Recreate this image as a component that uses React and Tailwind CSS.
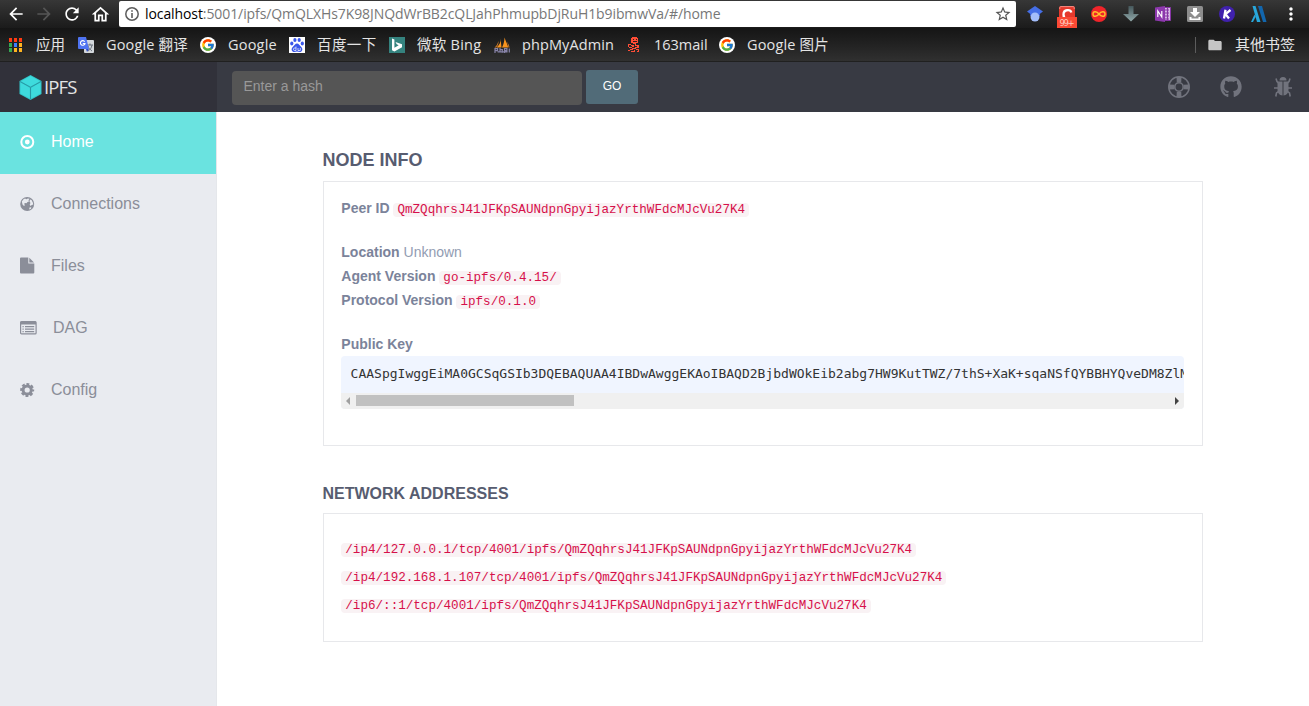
import { FaGithub } from 'react-icons/fa';
import { FcGoogle } from 'react-icons/fc';
import { MdArrowBack, MdArrowForward, MdRefresh, MdOutlineHome, MdMoreVert, MdStarBorder, MdFolder } from 'react-icons/md';

const PEER = 'QmZQqhrsJ41JFKpSAUNdpnGpyijazYrthWFdcMJcVu27K4';
const KEY = 'CAASpgIwggEiMA0GCSqGSIb3DQEBAQUAA4IBDwAwggEKAoIBAQD2BjbdWOkEib2abg7HW9KutTWZ/7thS+XaK+sqaNSfQYBBHYQveDM8ZlM';

function Code({ children }) {
  return (
    <code className="inline-block h-[14px] rounded-[4px] bg-[#f9f2f4] px-1 align-baseline font-['Liberation_Mono',monospace] text-[12.6px] leading-[14px] text-[#d6104a]">
      {children}
    </code>
  );
}

function Bookmark({ icon, label, gap, width, tracking = '' }) {
  return (
    <div className={`flex items-center ${gap} ${width}`}>
      {icon}
      <span className={`whitespace-pre ${tracking}`}>{label}</span>
    </div>
  );
}

function AppsIcon() {
  const c = ['#ff3b12', '#ff3b12', '#ff3b12', '#34a853', '#3b7cff', '#ffb420', '#34a853', '#ffb420', '#ffb420'];
  return (
    <svg width="14" height="14" viewBox="0 0 14 14" shapeRendering="crispEdges">
      {c.map((f, i) => <rect key={i} x={(i % 3) * 5} y={Math.floor(i / 3) * 5} width="3" height="4" fill={f} />)}
    </svg>
  );
}

function TranslateIcon() {
  return (
    <svg width="16" height="16" viewBox="0 0 16 16">
      <rect x="6" y="3" width="10" height="13" rx="1" fill="#d4d8dc" />
      <path d="M9 8h6M12 6.500V8M10 14c2-1 3.500-3 4-6M10 9c.7 2 2 3.600 4 5" stroke="#68717c" strokeWidth="1" fill="none" />
      <path d="M1 0h7l3 12H1a1 1 0 0 1-1-1V1a1 1 0 0 1 1-1z" fill="#4f74f2" />
      <path d="M8 12h3l-2 3z" fill="#2b49c5" />
      <path d="M6.700 4.700A2.300 2.300 0 1 0 7 6.500H4.800" stroke="#fff" strokeWidth="1.100" fill="none" />
    </svg>
  );
}

function GoogleIcon() {
  return (
    <span className="flex size-4 items-center justify-center rounded-full bg-white">
      <FcGoogle size={14} />
    </span>
  );
}

function BaiduIcon() {
  return (
    <svg width="16" height="16" viewBox="0 0 16 16">
      <rect width="16" height="16" fill="#fff" />
      <g fill="#3a57ea">
        <ellipse cx="5.900" cy="3" rx="1.600" ry="2.100" />
        <ellipse cx="10.200" cy="3" rx="1.600" ry="2.100" />
        <ellipse cx="2.800" cy="6.500" rx="1.600" ry="1.900" />
        <ellipse cx="13.300" cy="6.500" rx="1.600" ry="1.900" />
        <path d="M8 6.600c1.900 0 2.200 1.500 3.600 2.600 3 2.400 1.900 5.800-1 5.800-1 0-1.600-.4-2.600-.4s-1.600.4-2.600.4c-2.900 0-4-3.400-1-5.800C5.800 8.100 6.100 6.600 8 6.600z" />
      </g>
      <path d="M7 9.500v4H5.700a1.200 1.200 0 0 1 0-2.500H7M9 11v2.500h2.300V11" stroke="#fff" strokeWidth=".7" fill="none" />
    </svg>
  );
}

function BingIcon() {
  return (
    <svg width="16" height="16" viewBox="0 0 16 16">
      <rect width="16" height="16" fill="#35837f" />
      <path d="M3 1.500l2.400.9v8.400l4.300-2.500-2-1L6.500 5 13 7.200v3L5.400 14.500 3 13.200z" fill="#fff" />
    </svg>
  );
}

function PhpIcon() {
  return (
    <svg width="16" height="16" viewBox="0 0 16 16">
      <path d="M6.500 1.500C7 5 5.500 8 2.500 10.500h5zM10.500.500c1 3.500 3 6.500 3.700 10H8C9.500 7.500 10.500 4 10.500.500z" fill="#f7931e" />
      <path d="M4.300 4C4 6.500 2.500 9 .500 10.500H2C4 8.500 4.800 6.500 4.300 4zM13 4.500c1.200 2 2.200 4 2.500 6h-1C14.300 8.500 13.800 6.500 13 4.500z" fill="#e08327" />
      <path d="M1 16v-4.300h2.600v2H1M6 11v4.500M6 12.700h2.300v3M10.500 16v-4.300h2.400v2h-2.400M15.300 11.500v4M3.600 14.800h10" stroke="#8783a8" strokeWidth="1.200" fill="none" />
    </svg>
  );
}

function MailIcon() {
  return (
    <svg width="12" height="15" viewBox="0 0 12 15" shapeRendering="crispEdges">
      <path d="M4 0h5v1h1v5H8v1H5V6H3V1h1z" fill="#ff4d36" />
      <path d="M5 2h1v1H5zM8 2h1v1H8zM5 4h4v1H5z" fill="#321c1a" />
      <path d="M0 7h3v1h3v1H3V8H1v2H0zM7 7h1v1h3v2H9V9H6v1H4v1H1v-1h3V9h3zM4 11h3v-1h4v1H8v1H5v1H2v1H0v-1h2v-1h2zM8 12h3v3H9v-1h1v-1H8zM6 13h1v2H3v-1h3z" fill="#ff4d36" />
    </svg>
  );
}

function Extensions() {
  return (
    <div className="flex flex-1 items-center text-white">
      <svg width="16" height="16" viewBox="0 0 16 16" className="ml-[11px]">
        <path d="M3 6h10v4H3z" fill="#3654c4" />
        <path d="M8 0l8 5.500-4 3H4l-4-3z" fill="#456ee6" />
        <circle cx="8" cy="11" r="4.500" fill="#a3bdfa" />
      </svg>
      <svg width="20" height="28" viewBox="0 0 20 28" className="ml-[14px]">
        <rect x="2" y="6" width="16" height="16" rx="2" fill="#e5392c" />
        <path d="M2.800 9V7.600a1 1 0 0 1 1-1h12.400a1 1 0 0 1 1 1V9" stroke="#f4a39c" strokeWidth=".8" fill="none" />
        <path d="M14.300 12.500C13.500 9.300 6.500 9 6.500 14.500c0 2 1 4 3 4.500" stroke="#fff" strokeWidth="2.300" fill="none" />
        <rect y="17" width="20" height="11" fill="#fb4934" />
        <text x="2.500" y="26" fontSize="8.500" fontFamily="DejaVu Sans, sans-serif" fill="#ffc8bd" textLength="15">99+</text>
      </svg>
      <svg width="16" height="16" viewBox="0 0 16 16" className="ml-[14px]">
        <circle cx="8" cy="8" r="8" fill="#f0242a" />
        <path d="M8 8C6 5.300 2 4.500 2 8s4 2.700 6 0 6-3.500 6 0S10 10.700 8 8z" fill="none" stroke="#ffc02a" strokeWidth="1.500" />
      </svg>
      <svg width="16" height="16" viewBox="0 0 16 16" className="ml-[16px]">
        <defs><linearGradient id="arrow" x2="0" y2="1"><stop stopColor="#46585c" /><stop offset="1" stopColor="#91a9aa" /></linearGradient></defs>
        <path d="M5.500 0h5v8H16l-8 7.500L0 8h5.500z" fill="url(#arrow)" />
      </svg>
      <svg width="16" height="16" viewBox="0 0 16 16" className="ml-[16px]">
        <path d="M8 1.500h7.500v13H8z" fill="#d7b9e5" stroke="#8735a5" />
        <path d="M9 4h5M9 7h5M9 10h5M9 13h5M12.500 2v12" stroke="#8735a5" strokeWidth="1.200" />
        <path d="M0 1.500L10 0v16L0 14.500z" fill="#8d38ad" />
        <path d="M2.800 11V5l4 6V5" stroke="#fff" strokeWidth="1.200" fill="none" />
      </svg>
      <svg width="16" height="16" viewBox="0 0 16 16" className="ml-[16px]">
        <rect width="16" height="16" rx="1.500" fill="#8e8e8e" />
        <path d="M6 2h4v4h3l-5 5-5-5h3zM2.500 11v3h11v-3h-2v1.500h-7V11z" fill="#fff" />
      </svg>
      <svg width="16" height="16" viewBox="0 0 16 16" className="ml-[16px]">
        <circle cx="8" cy="8" r="8" fill="#4021ad" />
        <path d="M6.500 3.700l-1.500 8.800M11.500 4L6.500 8.200l3.500 4.300" stroke="#fff" strokeWidth="2.300" fill="none" />
      </svg>
      <svg width="16" height="16" viewBox="0 0 16 16" className="ml-[16px]">
        <path d="M1.500 0h3l5 16H6zM0 16h2l2.500-5-1-2.500z" fill="#28a7db" />
        <path d="M7 0h4l4.500 16H12z" fill="#1266ad" />
      </svg>
      <MdMoreVert size={20} className="ml-[14px]" />
    </div>
  );
}

const HomeGlyph = () => (
  <svg width="15" height="14" viewBox="0 0 15 14"><circle cx="7.300" cy="7" r="6" fill="none" stroke="currentColor" strokeWidth="2" /><circle cx="7.300" cy="7" r="2.400" fill="currentColor" /></svg>
);
const GlobeGlyph = () => (
  <svg width="15" height="14" viewBox="0 0 15 14">
    <circle cx="7.200" cy="7" r="7" fill="currentColor" />
    <path d="M1.800 4.500L3.500 2.200 5 1.500l1.500.7L7.800 1.500l1.700.3-1 1.400.5 1.300-1.500.5-1 1.200-1.500-.3-1 1 1 1.200L4 9 2.500 7.500zM10 2.500l1.500.5 1.300 2.500.5 2-1.500.5-1.300 1-.8-1.500.8-1.500L9.500 4.500zM9.500 10.500l1.800-.3-.3 1.500-1.800.8z" fill="#e9ebf0" />
  </svg>
);
const FileGlyph = () => (
  <svg width="15" height="17" viewBox="0 0 15 17"><path d="M1 .5h7.300v6h6V15.500a1 1 0 0 1-1 1H1a1 1 0 0 1-1-1v-14a1 1 0 0 1 1-1zM9.300.8L14 5.500H9.300z" fill="currentColor" /></svg>
);
const ListGlyph = () => (
  <svg width="17" height="14" viewBox="0 0 17 14">
    <rect x=".6" y=".6" width="15.500" height="12.300" rx="1" fill="none" stroke="currentColor" strokeWidth="1.200" />
    <path d="M.5.500h15.500v3H.5z" fill="currentColor" />
    <path d="M2.500 5.700h1.200M2.500 8.200h1.200M2.500 10.700h1.200M5 5.700h9.200M5 8.200h9.200M5 10.700h9.200" stroke="currentColor" strokeWidth="1.300" />
  </svg>
);
const CogGlyph = () => (
  <svg width="15" height="14" viewBox="0 0 15 14">
    <circle cx="7.200" cy="7" r="4.100" fill="none" stroke="currentColor" strokeWidth="3" />
    <circle cx="7.200" cy="7" r="6" fill="none" stroke="currentColor" strokeWidth="2" strokeDasharray="2.900 1.812" strokeDashoffset="1.450" />
  </svg>
);

const NAV = [
  { label: 'Home', icon: HomeGlyph },
  { label: 'Connections', icon: GlobeGlyph },
  { label: 'Files', icon: FileGlyph },
  { label: 'DAG', icon: ListGlyph },
  { label: 'Config', icon: CogGlyph },
];

function LifeRing() {
  return (
    <svg width="22" height="22" viewBox="0 0 22 22">
      <circle cx="11" cy="11" r="10.200" fill="none" stroke="currentColor" strokeWidth="1.600" />
      <circle cx="11" cy="11" r="4.200" fill="none" stroke="currentColor" strokeWidth="1.600" />
      <path d="M8.500 1l.3 5.500a5 5 0 0 1 4.400 0L13.500 1zM8.500 21l.3-5.500a5 5 0 0 0 4.400 0l.3 5.500zM1 8.500l5.500.3a5 5 0 0 0 0 4.400L1 13.500zM21 8.500l-5.500.3a5 5 0 0 1 0 4.400l5.500.3z" fill="currentColor" />
    </svg>
  );
}

function Bug() {
  return (
    <svg width="18" height="20" viewBox="0 0 18 20">
      <path d="M5.500 3.500a3.500 3.500 0 0 1 7 0z" fill="currentColor" />
      <path d="M3.500 4.500h5V18.500C5.500 18.300 3.500 16 3.500 13zM9.500 4.500h5V13c0 3-2 5.300-5 5.500z" fill="currentColor" />
      <path d="M2 1.500L3 4.500 5 6.500M16 1.500L15 4.500 13 6.500M0 11h5M18 11h-5M5 14l-2.500 2L1.800 19.500M13 14l2.500 2 .7 3.500" stroke="currentColor" strokeWidth="1.600" fill="none" />
    </svg>
  );
}

export default function App() {
  return (
    <div className="flex h-[706px] w-[1309px] flex-col overflow-hidden bg-white font-['Liberation_Sans',sans-serif]">
      <div className="flex h-7 shrink-0 items-center bg-linear-to-b from-[#373737] to-[#1b1b1b] text-white">
        <MdArrowBack size={20} className="ml-1.5" />
        <MdArrowForward size={20} className="ml-2 text-[#555]" />
        <MdRefresh size={20} className="ml-2" />
        <MdOutlineHome size={21} className="ml-2" />
        <div className="ml-2 flex h-[26px] w-[897px] items-center rounded-[2px] bg-white pl-1.5 pr-1">
          <svg width="14" height="14" viewBox="0 0 14 14"><circle cx="7" cy="7" r="6.200" fill="none" stroke="#5c5c5c" strokeWidth="1.500" /><path d="M7 3.200v1.600M7 6v5" stroke="#5c5c5c" strokeWidth="1.600" /></svg>
          <span className="mb-px ml-1.5 flex-1 whitespace-nowrap font-['Open_Sans',sans-serif] text-[14px] tracking-[-0.09px] text-[#777]"><span className="text-black">localhost</span>:5001/ipfs/QmQLXHs7K98JNQdWrBB2cQLJahPhmupbDjRuH1b9ibmwVa/#/home</span>
          <MdStarBorder size={18} className="text-[#555]" />
        </div>
        <Extensions />
      </div>

      <div className="flex h-[34px] shrink-0 items-center border-b border-[#202020] bg-linear-to-b from-[#151515] to-[#303030] pl-[9px] font-['Open_Sans','Noto_Sans_CJK_SC',sans-serif] text-[14.5px] text-[#e4e4e4]">
        <Bookmark icon={<AppsIcon />} label="应用" gap="gap-[13px]" width="w-[69px]" />
        <Bookmark icon={<TranslateIcon />} label="Google 翻译" gap="gap-[12px]" width="w-[122px]" tracking="tracking-[0.15px]" />
        <Bookmark icon={<GoogleIcon />} label="Google" gap="gap-[12px]" width="w-[89px]" tracking="tracking-[0.2px]" />
        <Bookmark icon={<BaiduIcon />} label="百度一下" gap="gap-[12px]" width="w-[100px]" tracking="tracking-[0.4px]" />
        <Bookmark icon={<BingIcon />} label="微软 Bing" gap="gap-[12px]" width="w-[105px]" tracking="tracking-[0.25px]" />
        <Bookmark icon={<PhpIcon />} label="phpMyAdmin" gap="gap-[12px]" width="w-[134px]" tracking="tracking-[0.1px]" />
        <Bookmark icon={<MailIcon />} label="163mail" gap="gap-[14px]" width="w-[91px]" />
        <Bookmark icon={<GoogleIcon />} label="Google 图片" gap="gap-[12px]" width="flex-1" tracking="tracking-[0.15px]" />
        <div className="mr-[11px] h-4 w-px bg-[#5c5c5c]" />
        <MdFolder size={16} className="mr-3 text-[#c5c5c5]" />
        <span className="mr-3.5 text-[15px]">其他书签</span>
      </div>

      <header className="flex h-[50px] shrink-0 bg-[#383a43]">
        <div className="flex w-[217px] items-center bg-[#31313a] pl-[19px]">
          <svg width="23" height="25" viewBox="0 0 22 25">
            <path d="M11 0l11 6v13l-11 6-11-6V6z" fill="#33c5c9" />
            <path d="M11 1l9.500 5.200L11 11.500 1.500 6.200zM1 7.500l9.300 5.200v10.800L1 18.400zM21 7.500l-9.300 5.200v10.800l9.300-5.100z" fill="#3edbdd" />
            <path d="M.5 6.500L11 12.300l10.500-5.800M11 12.300V24.500" fill="none" stroke="#289aa6" strokeWidth="1" />
          </svg>
          <span className="mb-px ml-[2px] font-['Open_Sans',sans-serif] text-[18.5px] tracking-[-0.9px] text-[#e3e4e5]">IPFS</span>
        </div>
        <div className="flex flex-1 pl-[15px]">
          <div className="mt-[9px] h-[34px] w-[350px] rounded-[4px] bg-[#555] pl-[11.5px] text-[14px] leading-[31px] text-[#999]">Enter a hash</div>
          <div className="ml-1 mt-2 h-[34px] w-[52px] rounded-[3px] bg-[#516b78] text-center text-[12px] leading-[32px] text-white">GO</div>
          <div className="flex flex-1 items-center justify-end text-[#71737d]">
            <LifeRing /><div className="w-[30px]" /><FaGithub size={22} /><div className="w-[32px]" /><Bug /><div className="w-[17px]" />
          </div>
        </div>
      </header>

      <div className="flex flex-1">
        <nav className="w-[217px] border-r border-[#e5e7eb] bg-[#e9ebf0] text-[16px] text-[#8b8e99]">
          {NAV.map(({ label, icon: Icon }, i) => (
            <div key={label} className={`flex h-[62px] items-center pl-5 pb-[3px] ${i === 0 ? 'bg-[#6ae3e0] text-white' : ''}`}>
              <Icon />
              <span className="ml-4">{label}</span>
            </div>
          ))}
        </nav>
        <main className="flex-1 pl-[105px] text-[14px] text-[#7b839a]">
          <h1 className="mt-9 pl-[0.5px] text-[18px] font-bold leading-6 text-[#575c70]">NODE INFO</h1>
          <section className="ml-px mt-[9px] h-[265px] w-[880px] border border-[#e7e8eb] pl-[17px] pr-[18px] pt-[14px] leading-6">
            <div className="pl-[0.3px]"><b>Peer ID</b> <Code>{PEER}</Code></div>
            <div className="mt-5 pl-[0.3px]"><b>Location</b> <span className="text-[#929cb2]">Unknown</span></div>
            <div className="pl-[0.3px]"><b>Agent Version</b> <Code>go-ipfs/0.4.15/</Code></div>
            <div className="pl-[0.3px]"><b>Protocol Version</b> <Code>ipfs/0.1.0</Code></div>
            <div className="mt-5 pl-[0.3px]"><b>Public Key</b></div>
            <div className="w-[843px] overflow-hidden rounded-[4px] bg-[#f0f5ff]">
              <div className="h-[37px] overflow-hidden whitespace-nowrap pl-[9.6px] font-['DejaVu_Sans_Mono',monospace] text-[13px] leading-[35px] text-[#333]">{KEY}</div>
              <div className="flex h-4 items-center justify-between bg-[#f0f0f0] px-[5px] pb-px">
                <div className="flex items-center gap-[6px]">
                  <svg width="4" height="8" viewBox="0 0 4 8"><path d="M4 0v8L0 4z" fill="#a0a0a0" /></svg>
                  <div className="h-[11px] w-[218px] bg-[#c1c1c1]" />
                </div>
                <svg width="4" height="8" viewBox="0 0 4 8"><path d="M0 0v8l4-4z" fill="#444" /></svg>
              </div>
            </div>
          </section>
          <h2 className="mt-9 pl-[0.5px] text-[16px] font-bold leading-6 text-[#575c70]">NETWORK ADDRESSES</h2>
          <section className="ml-px mt-[7px] flex h-[129px] w-[880px] flex-col border border-[#e7e8eb] pl-[17px] pt-5 leading-7">
            {['/ip4/127.0.0.1/tcp/4001/ipfs/', '/ip4/192.168.1.107/tcp/4001/ipfs/', '/ip6/::1/tcp/4001/ipfs/'].map((a) => (
              <div key={a} className="pl-[0.3px]"><Code>{a + PEER}</Code></div>
            ))}
          </section>
        </main>
      </div>
    </div>
  );
}
